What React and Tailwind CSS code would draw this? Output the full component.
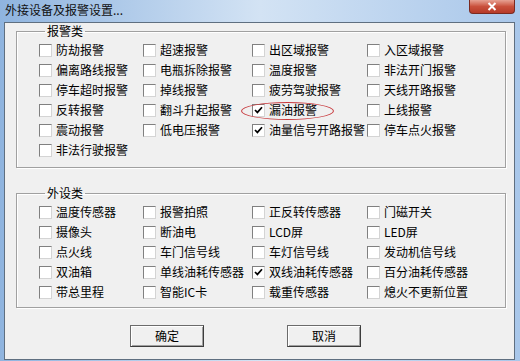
const ALARMS = [
  ["防劫报警", false], ["超速报警", false], ["出区域报警", false], ["入区域报警", false],
  ["偏离路线报警", false], ["电瓶拆除报警", false], ["温度报警", false], ["非法开门报警", false],
  ["停车超时报警", false], ["掉线报警", false], ["疲劳驾驶报警", false], ["天线开路报警", false],
  ["反转报警", false], ["翻斗升起报警", false], ["漏油报警", true, true], ["上线报警", false],
  ["震动报警", false], ["低电压报警", false], ["油量信号开路报警", true], ["停车点火报警", false],
  ["非法行驶报警", false],
];

const DEVICES = [
  ["温度传感器", false], ["报警拍照", false], ["正反转传感器", false], ["门磁开关", false],
  ["摄像头", false], ["断油电", false], ["LCD屏", false], ["LED屏", false],
  ["点火线", false], ["车门信号线", false], ["车灯信号线", false], ["发动机信号线", false],
  ["双油箱", false], ["单线油耗传感器", false], ["双线油耗传感器", true], ["百分油耗传感器", false],
  ["带总里程", false], ["智能IC卡", false], ["载重传感器", false], ["熄火不更新位置", false],
];

const CheckBox = ({ checked }) => (
  <span className="w-[13px] h-[13px] shrink-0 bg-white border border-t-[#808080] border-l-[#808080] border-r-[#d4d4d4] border-b-[#d4d4d4] flex items-center justify-center">
    {checked ? (
      <svg width="9" height="8" viewBox="0 0 9 8">
        <path d="M1 4 L3.4 6.4 L8 1.2" fill="none" stroke="#000" strokeWidth="1.7" />
      </svg>
    ) : null}
  </span>
);

const Item = ({ label, checked, circled }) => (
  <div className="relative h-[20px] flex items-center gap-[4px] whitespace-nowrap">
    <CheckBox checked={checked} />
    <span>{label}</span>
    {circled ? (
      <div className="absolute left-[-11px] top-[2px] w-[93px] h-[18px] rounded-[50%] border border-[#c8383c]" />
    ) : null}
  </div>
);

const Group = ({ title, items, className }) => (
  <fieldset className={`border border-[#a0a0a0] shadow-[inset_1px_1px_0_#fff,1px_1px_0_#fff] pl-[22px] pt-[1px] ${className}`}>
    <legend className="ml-[6px] px-[2px] leading-[16px]">{title}</legend>
    <div className="grid grid-cols-[104px_109px_115px_1fr] auto-rows-[20px]">
      {items.map(([label, checked, circled]) => (
        <Item key={label} label={label} checked={checked} circled={circled} />
      ))}
    </div>
  </fieldset>
);

const Button = ({ children, className }) => (
  <button className={`w-[74px] h-[22px] bg-[#f0f0f0] border border-[#6b6b6b] border-r-[#3c3c3c] border-b-[#3c3c3c] shadow-[inset_1px_1px_0_#fff,inset_-1px_-1px_0_#a0a0a0] text-[12px] leading-[16px] ${className}`}>
    {children}
  </button>
);

export default function App() {
  return (
    <div
      className="w-[520px] h-[361px] flex flex-col bg-gradient-to-r from-[#8fb4df] via-[#d3e3f4] to-[#a9c7ea] text-[12px] text-black"
      style={{ fontFamily: '"Noto Sans CJK SC", "Noto Sans", sans-serif' }}
    >
      <div className="h-[22px] flex items-start">
        <span className="pl-[5px] pt-[2px] leading-[16px] text-[#111]">外接设备及报警设置...</span>
        <div className="ml-auto mr-[5px] w-[46px] h-[14px] rounded-b-[4px] border border-t-0 border-[#7a2a20] bg-gradient-to-b from-[#e6a193] via-[#c9503c] to-[#b63a28] flex items-center justify-center">
          <svg width="10" height="9" viewBox="0 0 10 9">
            <path d="M1.5 1 L8.5 8 M8.5 1 L1.5 8" stroke="#fff" strokeWidth="2" />
          </svg>
        </div>
      </div>
      <div className="flex-1 flex pl-[4px] pr-[5px] pb-[1px]">
        <div className="flex-1 flex flex-col bg-[#f0f0f0] border border-[#5f6f80] pl-[11px] pr-[8px]">
          <Group title="报警类" items={ALARMS} className="pb-[7px]" />
          <Group title="外设类" items={DEVICES} className="mt-[17px] pb-[5px]" />
          <div className="mt-[17px] flex gap-[83px] pl-[114px]">
            <Button>确定</Button>
            <Button>取消</Button>
          </div>
        </div>
      </div>
    </div>
  );
}
